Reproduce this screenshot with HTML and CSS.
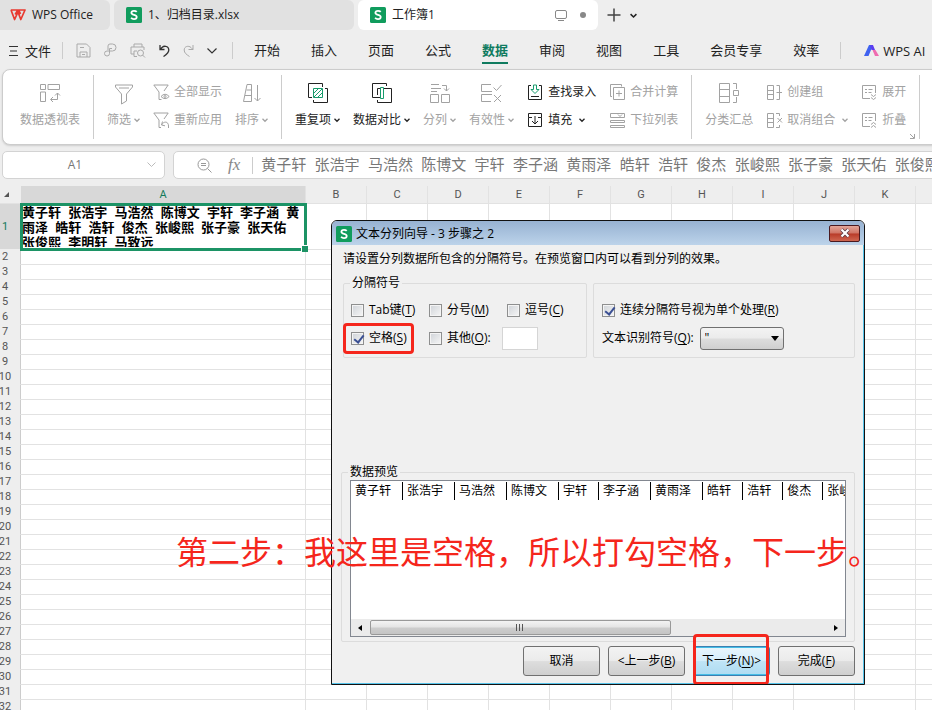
FILE: index.html
```html
<!DOCTYPE html>
<html lang="zh-CN">
<head>
<meta charset="utf-8">
<meta name="viewport" content="width=device-width, initial-scale=1">
<title>工作簿1 - WPS Office</title>
<link rel="stylesheet" href="styles.css">
</head>
<body>
<svg class="defs" aria-hidden="true">
  <symbol id="chev" viewBox="0 0 6 6"><path d="M.5 1.8 3 4.3 5.500 1.800" fill="none" stroke="currentColor" stroke-width="1.3"/></symbol>
  <symbol id="sheet-logo" viewBox="0 0 16 16"><rect width="16" height="16" rx="1.500" fill="#109c5d"/><path d="M10.700 4.900C10.100 4.200 9.200 3.800 8 3.800c-1.600 0-2.600.8-2.600 2 0 2.800 5.300 1.400 5.300 4.200 0 1.300-1.100 2.100-2.700 2.100-1.300 0-2.300-.5-2.900-1.300" fill="none" stroke="#fff" stroke-width="1.800"/></symbol>
</svg>
<div class="app">
  <header class="tabs">
    <button class="tab home" type="button">
      <svg width="16" height="12" viewBox="0 0 16 12"><path d="M.8 1h7L5.200 5.500M1 1l3.600 9.500L8 3l2.800 7.500L15 1H8.500l2 4" fill="none" stroke="#e8392f" stroke-width="1.700" stroke-linejoin="round"/></svg>
      WPS Office
    </button>
    <button class="tab file" type="button"><svg width="16" height="16"><use href="#sheet-logo"/></svg>1、归档目录.xlsx</button>
    <button class="tab file active" type="button"><svg width="16" height="16"><use href="#sheet-logo"/></svg>工作簿1
      <svg class="screen" width="12" height="11" viewBox="0 0 12 11"><rect x=".5" y=".5" width="11" height="8" rx="1.500" fill="none" stroke="#888"/><path d="M3 10.500h6" stroke="#888"/></svg>
      <span class="dot"></span>
    </button>
    <button class="plain new" type="button" aria-label="新建"><svg width="14" height="14" viewBox="0 0 14 14"><path d="M7 .5v13M.5 7h13" stroke="#444" stroke-width="1.500"/></svg></button>
    <button class="plain" type="button" aria-label="标签列表"><svg width="7" height="7"><use href="#chev"/></svg></button>
  </header>

  <nav class="menu">
    <button class="plain filebtn" type="button"><svg width="9" height="12" viewBox="0 0 9 12"><path d="M0 1.500h9M1 6h7M0 10.500h9" stroke="#333"/></svg>文件</button>
    <span class="rule"></span>
    <div class="quick">
      <svg width="15" height="15" viewBox="0 0 15 15"><path d="M1 1h9.500L14 4.500V14H1zM4 14V9h7v5M4 4.500h4M6 11.500h3"/></svg>
      <svg width="13" height="15" viewBox="0 0 13 15"><path d="M4 7V3q0-2 2-2h2.500a3.500 3.500 0 0 1 0 7H3a2.500 2.500 0 1 0 2.500 2.500V5.500H8"/></svg>
      <svg width="16" height="15" viewBox="0 0 16 15"><path d="M4 4V1h8v3M4 11H1V4h13v3M4 13.500V8h3M4 13.500h3"/><circle cx="10.500" cy="10" r="3"/><path d="m12.500 12 2.500 2.500"/></svg>
      <svg class="dark" width="11" height="13" viewBox="0 0 11 13"><path d="M1 1v4.500h4.500M1 5.500l2-2C5.500 1.200 9.800 2.300 9.800 6c0 3-2.300 4.500-5.300 6.500" stroke-width="1.300"/></svg>
      <svg width="11" height="13" viewBox="0 0 11 13"><path d="M10 1v4.500H5.500M10 5.500l-2-2C5.500 1.200 1.200 2.300 1.200 6c0 3 2.300 4.500 5.300 6.500"/></svg>
      <svg class="dark" width="10" height="6" viewBox="0 0 10 6"><path d="m.5.5 4.500 4.500L9.500.5" stroke-width="1.200"/></svg>
    </div>
    <span class="rule"></span>
    <div class="links">
      <a href="#">开始</a><a href="#">插入</a><a href="#">页面</a><a href="#">公式</a><a href="#" class="on">数据</a><a href="#">审阅</a><a href="#">视图</a><a href="#">工具</a><a href="#">会员专享</a><a href="#">效率</a>
    </div>
    <span class="rule"></span>
    <button class="plain ai" type="button"><svg width="15" height="12" viewBox="0 0 15 12"><path d="M5 0h4L4.500 11H0z" fill="#3f62f0"/><path d="M6 0h3l2 5H7.500z" fill="#5b3df0"/><path d="M8.500 5h3L15 11h-4z" fill="#ef6bb0"/></svg>WPS AI</button>
  </nav>

  <section class="ribbon">
    <button class="tool off" type="button"><svg width="22" height="20" viewBox="0 0 22 20"><path d="M1.500 1.500h5v5h-5zM9 1.500h11.500v5H9zM1.500 9h5v9.500h-5zM18.500 10v6.500H12M16 12.500l2.500-2.500 2.500 2.500M14 14l-2.500 2.500L14 19"/></svg><span>数据透视表</span></button>
    <span class="rule"></span>
    <button class="tool off" type="button"><svg width="20" height="22" viewBox="0 0 20 22"><path d="M1.500 2h17v2l-6 7v7l-5 3V11l-6-7zM5 5h10"/></svg><span>筛选<svg class="c"><use href="#chev"/></svg></span></button>
    <div class="pair off">
      <button type="button"><svg width="17" height="17" viewBox="0 0 17 17"><path d="M6 15.500V8L.8 1h14.400L11 7M6 15.500h2.500M8 12.500q4-4.500 8.200 0-4.200 4.300-8.200 0z"/><circle cx="12" cy="12.500" r="1"/></svg>全部显示</button>
      <button type="button"><svg width="17" height="17" viewBox="0 0 17 17"><path d="M6 15.500V8L.8 1h14.400L11 7M9.500 9.500 8.500 13l3.500.8M8.500 13c2-4 7-4 7 1v2M6 15.500h2"/></svg>重新应用</button>
    </div>
    <button class="tool off" type="button"><svg width="20" height="20" viewBox="0 0 20 20"><path d="M5 1.500h4.500v17h-8zM4.500 7h5M3 12.500h6.500M15.500 2v16M12.500 15l3 3 3-3"/></svg><span>排序<svg class="c"><use href="#chev"/></svg></span></button>
    <span class="rule"></span>
    <button class="tool" type="button"><svg width="20" height="20" viewBox="0 0 20 20"><path d="M4 14.500H.5V.5h14V4M5.500 17v2.500h14v-14H17"/><path class="g" d="M5.500 5.500h9v9h-9zM6 10l4-4M6 14l8-8M10 14l4-4"/></svg><span>重复项<svg class="c"><use href="#chev"/></svg></span></button>
    <button class="tool" type="button"><svg width="20" height="20" viewBox="0 0 20 20"><path d="M8 14.500H.5V.5h14V3M5.500 17v2.500h14v-14H12M8.500 5.500h-3V12"/><path class="g" d="M8.500 4.500h3v11h-3z"/></svg><span>数据对比<svg class="c"><use href="#chev"/></svg></span></button>
    <button class="tool off" type="button"><svg width="20" height="20" viewBox="0 0 20 20"><path d="M1 1.500h8M1 5.500h10M1 8.500h6M12 2.500h4.500V8M14 5.500l2.500 2.500L19 5.500M.5 11.500h8v8h-8zM11.500 11.500h8v8h-8z"/></svg><span>分列<svg class="c"><use href="#chev"/></svg></span></button>
    <button class="tool off" type="button"><svg width="21" height="20" viewBox="0 0 21 20"><path d="M10 1.500H.5v7H11M11 11.500H.5v7H10M12.500 4.500l3 3 5-5.500M13 12l7 7M20 12l-7 7"/></svg><span>有效性<svg class="c"><use href="#chev"/></svg></span></button>
    <div class="pair">
      <button type="button"><svg width="17" height="17" viewBox="0 0 17 17"><path d="M4 1.500H1.500v14h13v-14H12M4 12.500h8"/><path class="g" d="M6.500 1h3v4.500H12l-4 4-4-4h2.500z"/></svg>查找录入</button>
      <button type="button"><svg width="17" height="17" viewBox="0 0 17 17"><path d="M5 5.500H1.500v-4h13v4H11M1.500 5.500v9h13v-9M8 4v8M5 9l3 3 3-3"/></svg>填充<svg class="c"><use href="#chev"/></svg></button>
    </div>
    <div class="pair off">
      <button type="button"><svg width="17" height="17" viewBox="0 0 17 17"><path d="M3 12.500H1.500v-12h11v2M4.500 3.500h11v12h-11zM10 6.500v6M7 9.500h6"/></svg>合并计算</button>
      <button type="button"><svg width="17" height="17" viewBox="0 0 17 17"><path d="M1.500 1.500h14v4h-14zM1.500 8.500h14v2h-14zM1.500 13.500h14v2h-14zM9 2.500l2 2 2-2"/></svg>下拉列表</button>
    </div>
    <span class="rule"></span>
    <button class="tool off" type="button"><svg width="20" height="20" viewBox="0 0 20 20"><path d="M.5.5h10v19H.5zM.5 6.500h10M.5 13.500h10M14 .5h3.500V6M14 19.500h3.500V14M14.500 7.500h5v5h-5z"/></svg><span>分类汇总</span></button>
    <div class="pair off">
      <button type="button"><svg width="17" height="17" viewBox="0 0 17 17"><path d="M1.500 1.500h6v14h-6zM1.500 6.500h6M1.500 10.500h6M10.500 1.500h3v14h-3M10.500 8.500H16"/></svg>创建组</button>
      <button type="button"><svg width="17" height="17" viewBox="0 0 17 17"><path d="M1.500 1.500h6v14h-6zM1.500 6.500h6M1.500 10.500h6M10 1.500h3.500V4M10 15.500h3.500V13M11.500 6l4.500 4.500M16 6l-4.500 4.500"/></svg>取消组合<svg class="c"><use href="#chev"/></svg></button>
    </div>
    <div class="pair off">
      <button type="button"><svg width="17" height="17" viewBox="0 0 17 17"><path d="M9 14.500H1.500v-13h13V9M4 5.500h2M7.500 5.500h4M4 8.500h2M7.500 8.500h3M10 10.500l2.500 2 2.500-2M10 13.500l2.500 2 2.500-2"/></svg>展开</button>
      <button type="button"><svg width="17" height="17" viewBox="0 0 17 17"><path d="M9 14.500H1.500v-13h13V9M4 5.500h2M7.500 5.500h4M4 8.500h2M7.500 8.500h3M10 12.500l2.500-2 2.500 2M10 15.500l2.500-2 2.500 2"/></svg>折叠</button>
    </div>
    <svg class="corner off" width="5" height="5" viewBox="0 0 5 5"><path d="m0 0 4 4M4.500 0v4.500H0"/></svg>
    <span class="rule"></span>
  </section>

  <section class="formula">
    <div class="namebox"><input aria-label="名称框" value="A1"><svg width="9" height="6" viewBox="0 0 9 6"><path d="m.5.500 4 4 4-4" fill="none" stroke="#bbb"/></svg></div>
    <div class="fx">
      <svg width="15" height="15" viewBox="0 0 15 15" fill="none" stroke="#999"><circle cx="6.500" cy="6.500" r="5.500"/><path d="m10.500 10.500 4 4M4 5.500h5M4 7.500h5"/></svg>
      <i>fx</i><span class="rule"></span>
      <input aria-label="编辑栏" value="黄子轩  张浩宇  马浩然  陈博文  宇轩  李子涵  黄雨泽  皓轩  浩轩  俊杰  张峻熙  张子豪  张天佑  张俊熙  李明轩  马致远">
    </div>
  </section>

  <main class="sheet">
    <table id="grid">
      <colgroup><col class="c-head"><col class="c-a"></colgroup>
      <thead><tr><th class="all"><svg width="5" height="5" viewBox="0 0 5 5"><path d="M5 0v5H0z" fill="#555"/></svg></th></tr></thead>
      <tbody></tbody>
    </table>
  </main>

  <div class="dialog" role="dialog" aria-labelledby="dlg-title">
    <div class="titlebar">
      <svg width="16" height="16"><use href="#sheet-logo"/></svg>
      <span id="dlg-title">文本分列向导 - 3 步骤之 2</span>
      <button type="button" class="close" aria-label="关闭"><svg width="12" height="10" viewBox="0 0 12 10"><path d="m2.500 1.500 7 7M9.500 1.500l-7 7" stroke="#5a3a44" stroke-width="3.800"/><path d="m2.500 1.500 7 7M9.500 1.500l-7 7" stroke="#fff" stroke-width="2.200"/></svg></button>
    </div>
    <form class="body">
      <p>请设置分列数据所包含的分隔符号。在预览窗口内可以看到分列的效果。</p>
      <div class="groups">
        <fieldset class="delims">
          <legend>分隔符号</legend>
          <div class="opts">
            <label><input type="checkbox">Tab键(<u>T</u>)</label>
            <label><input type="checkbox">分号(<u>M</u>)</label>
            <label><input type="checkbox">逗号(<u>C</u>)</label>
            <label class="marked"><input type="checkbox" checked>空格(<u>S</u>)</label>
            <label><input type="checkbox">其他(<u>O</u>):</label>
            <input class="other" type="text" aria-label="其他分隔符">
          </div>
        </fieldset>
        <fieldset class="extra">
          <label><input type="checkbox" checked>连续分隔符号视为单个处理(<u>R</u>)</label>
          <div class="qual"><label for="q">文本识别符号(<u>Q</u>):</label>
            <span class="drop"><select id="q"><option>"</option><option>'</option></select><svg width="8" height="5" viewBox="0 0 8 5"><path d="M0 0h8L4 5z"/></svg></span>
          </div>
        </fieldset>
      </div>
      <fieldset class="preview">
        <legend>数据预览</legend>
        <div class="pane">
          <div class="clip"><table><tbody><tr><td>黄子轩</td><td>张浩宇</td><td>马浩然</td><td>陈博文</td><td>宇轩</td><td>李子涵</td><td>黄雨泽</td><td>皓轩</td><td>浩轩</td><td>俊杰</td><td>张峻熙</td></tr></tbody></table></div>
          <div class="scroll">
            <svg width="4" height="6" viewBox="0 0 4 6"><path d="M4 0v6L0 3z"/></svg>
            <div class="track"><div class="thumb"><svg width="8" height="7" viewBox="0 0 8 7"><path d="M.5 0v7M3.500 0v7M6.500 0v7" stroke="#555"/></svg></div></div>
            <svg width="4" height="6" viewBox="0 0 4 6"><path d="M0 0v6l4-3z"/></svg>
          </div>
        </div>
      </fieldset>
      <div class="actions">
        <button type="button">取消</button>
        <button type="button">&lt;上一步(<u>B</u>)</button>
        <button type="button" class="next marked">下一步(<u>N</u>)&gt;</button>
        <button type="button">完成(<u>F</u>)</button>
      </div>
    </form>
  </div>
  <div class="note">第二步：我这里是空格，所以打勾空格，下一步。</div>
</div>
<script src="sheet.js"></script>
</body>
</html>
```
FILE: styles.css
```css
* { box-sizing: border-box; }
body {
  margin: 0;
  background: #eee;
  color: #222;
  font: 12px/16px "Open Sans", "Noto Sans CJK SC", sans-serif;
}
button, input, select { font: inherit; color: inherit; }
button { margin: 0; padding: 0; border: 0; background: none; white-space: nowrap; }
svg { flex: none; display: block; }
a { color: inherit; text-decoration: none; }
.defs { position: absolute; width: 0; height: 0; }
.app { position: relative; display: flex; flex-direction: column; height: 100vh; overflow: hidden; }
.rule { flex: none; width: 1px; background: #ccc; }

/* window tabs */
.tabs { display: flex; gap: 4px; height: 30px; }
.tab { display: flex; align-items: center; gap: 6px; padding: 0 12px; background: #e1e1e1; border-radius: 0 0 6px 6px; }
.tab.home { flex: 0 0 110px; padding: 0 10px; border-radius: 0 6px 6px 0; }
.tab.file { flex: 0 0 240px; border-radius: 6px; }
.tab.active { background: #fff; }
.screen { margin-left: auto; }
.dot { width: 6px; height: 6px; margin-left: 7px; border-radius: 50%; background: #888; }
.plain { display: flex; align-items: center; }
.new { margin: 0 5px; }

/* menu row */
.menu { display: flex; align-items: center; height: 39px; padding-top: 2px; font-size: 13px; line-height: 24px; }
.menu .rule { height: 17px; }
.filebtn { gap: 7px; padding: 0 11px 0 9px; }
.quick { display: flex; align-items: center; gap: 13px; padding: 0 15px 0 13px; fill: none; stroke: #aaa; }
.quick .dark { stroke: #333; }
.links { display: flex; flex: none; gap: 31px; padding: 0 21px; }
.links a { border-bottom: 2px solid transparent; }
.links .on { color: #0f7b5f; font-weight: 700; border-color: #0f7b5f; }
.ai { gap: 4px; padding-left: 23px; }

/* ribbon */
.ribbon {
  display: flex; flex: none; gap: 13px; height: 76px; margin: 0 -8px 0 2px; padding: 5px 0 5px 17px;
  background: #fff; border: 1px solid #ccc; border-radius: 8px; box-shadow: 0 1px 2px #ccc;
}
.ribbon svg { fill: none; stroke: currentColor; }
.ribbon button { flex: none; }
.ribbon .off { color: #a2a2a2; }
.ribbon .g { stroke: #189b6c; }
.tool { display: flex; flex-direction: column; align-items: center; justify-content: space-between; padding: 8px 0 11px; }
.tool span { display: flex; align-items: center; }
.ribbon .c { width: 6px; height: 6px; margin-left: 3px; }
.pair { display: flex; flex: none; flex-direction: column; gap: 12px; padding-top: 9px; }
.pair button { display: flex; align-items: center; gap: 4px; height: 16px; }
.corner { align-self: flex-end; margin: 0 -9px 0 -9px; }

/* formula bar */
.formula { display: flex; flex: none; gap: 8px; height: 41px; padding: 6px 0 7px 2px; color: #777; }
.namebox, .fx { display: flex; align-items: center; min-width: 0; background: #fff; border: 1px solid #d3d3d3; border-radius: 5px; }
.namebox { flex: 0 0 163px; padding-right: 8px; }
.formula input { width: 0; min-width: 0; flex: 1; padding: 0; border: 0; background: none; outline: 0; }
.namebox input { text-align: center; }
.fx { flex: 1; padding-left: 23px; margin-right: -8px; }
.fx i { margin: 0 12px 0 16px; font: italic 17px/20px "Liberation Serif", serif; color: #888; }
.fx .rule { height: 17px; margin-right: 8px; }
.fx input { font: 15px/20px "Liberation Sans", "Noto Sans CJK SC", sans-serif; }

/* sheet */
.sheet { flex: 1; overflow: hidden; }
.sheet table { width: 977px; table-layout: fixed; border-collapse: separate; border-spacing: 0; background: #fff; }
.c-head { width: 21px; }
.c-a { width: 285px; }
.sheet th, .sheet td { height: 15px; padding: 0; border: solid #e2e2e2; border-width: 0 1px 1px 0; line-height: 14px; }
.sheet th { background: #eee; color: #555; font: 11px/14px Roboto, sans-serif; white-space: nowrap; }
.sheet thead th { height: 18px; }
.sheet tbody th { border-bottom-color: #eee; border-right-color: #ccc; }
.sheet tbody th span { display: flex; justify-content: center; width: 10px; }
.sheet .picked { background: #d8d8d8; color: #137a5b; }
.sheet .all { border-right-color: #eee; }
.all svg { margin-left: 4px; }
.sheet td.sel { position: relative; vertical-align: top; height: 46px; outline: 3px solid #1c9365; outline-offset: -2px; }
.sel div {
  height: 43px; padding: 1px 0 0 1px; overflow: hidden; white-space: pre; color: #000;
  font: bold 13px/15px "Liberation Sans", "Noto Sans CJK SC", sans-serif;
}
.sel::after { content: ""; position: absolute; right: -3px; bottom: -3px; width: 6px; height: 6px; background: #1c9365; border: solid #fff; border-width: 1px 0 0 1px; }

/* dialog */
.dialog {
  position: absolute; left: 331px; top: 220px; width: 534px; color: #000;
  border: 1px solid #111; border-radius: 6px 6px 0 0; background: #f0f0f0; overflow: hidden;
}
.titlebar { display: flex; align-items: center; gap: 4px; height: 24px; padding: 1px 4px 0; background: linear-gradient(#97b2d2, #bcd3ea); }
.close {
  display: flex; align-items: center; justify-content: center; width: 31px; height: 17px; margin: 0 0 1px auto;
  border: 1px solid #4a1a20; border-radius: 2px; background: linear-gradient(#e3a698, #cf7263 48%, #b83a28 52%, #cf6650);
}
.body { padding: 5px 8px 7px 9px; border: solid #55c3ea; border-width: 0 1px 1px 0; }
.body p { margin: 0; padding: 0 2px; line-height: 18px; }
fieldset { min-width: 0; margin: 0; border: 1px solid #dcdcdc; border-radius: 2px; }
legend { padding: 0 2px; }
u { text-underline-offset: 2px; }
.groups { display: flex; gap: 6px; margin: 7px 0 106px 2px; }
.delims { flex: 0 0 244px; padding: 5px 6px; }
.opts { display: grid; grid-template-columns: repeat(3, 78px); grid-auto-rows: 28px; align-items: center; }
.body label { display: flex; align-items: center; white-space: nowrap; }
.body input[type=checkbox] {
  appearance: none; display: grid; flex: none; width: 13px; height: 13px; margin: 0 5px 0 1px;
  border: 1px solid #8e8f8f; background: linear-gradient(135deg, #cfd3d8, #f6f6f6); box-shadow: inset 0 0 0 1px #f4f4f4;
}
.body input:checked::before {
  content: ""; width: 4px; height: 8px; margin: 0 0 0 4px; border: solid #3a4f93; border-width: 0 2px 2px 0; transform: rotate(38deg);
}
.marked { position: relative; }
.marked::after { content: ""; position: absolute; border: 3px solid #f5261c; border-radius: 4px; }
label.marked::after { inset: -1px 14px -2px -7px; }
.opts label { height: 28px; }
.other { width: 36px; height: 23px; margin-left: -4px; padding: 0 3px; border: 1px solid #d5d5d5; background: #fff; }
.extra { flex: 1; margin-top: 8px; padding: 12px 7px 5px; }
.extra > * { height: 28px; }
.qual { display: flex; align-items: center; gap: 6px; padding-left: 1px; }
.drop { display: grid; align-items: center; }
.drop > * { grid-area: 1 / 1; }
.drop svg { justify-self: end; margin-right: 5px; pointer-events: none; }
.drop select, .actions button {
  border: 1px solid #707070; border-radius: 3px; background: linear-gradient(#f3f3f3, #ebebeb 48%, #ddd 52%, #cfcfcf);
}
.drop select { appearance: none; width: 84px; height: 23px; padding: 0 4px; color: #000; }
.preview { padding: 0 8px 4px; }
.preview legend { margin-left: -2px; }
.pane { display: flex; flex-direction: column; min-height: 157px; border: 1px solid #828790; background: #fff; }
.clip { flex: 1; overflow: hidden; padding: 1px 1px 0 0; }
.clip table { border-spacing: 0; }
.clip td { height: 18px; padding: 0 11px 0 4px; border-left: 1px solid #000; white-space: nowrap; line-height: 18px; }
.clip td:first-child { border-color: transparent; padding-left: 3px; }
.scroll { display: flex; align-items: center; gap: 8px; height: 17px; padding: 0 7px; background: #ebebeb; }
.track { flex: 1; }
.thumb { display: flex; align-items: center; justify-content: center; width: 66%; height: 15px; border: 1px solid #999; border-radius: 2px; background: linear-gradient(#f3f3f3, #e4e4e4 48%, #cdcdcd 52%, #c4c4c4); }
.actions { display: flex; justify-content: flex-end; gap: 8px; padding-top: 4px; }
.actions button { width: 77px; height: 30px; }
.actions .next { border-color: #3c7fb1; background: linear-gradient(#e8f5fc, #d6eefb 48%, #bfe4f6 52%, #aedcf2); box-shadow: inset 0 0 0 1px #45bde6; }
.next::after { inset: -13px 0 -10px -1px; }

.note { position: absolute; left: 176px; top: 530px; font: 32px/40px "Noto Sans CJK SC", sans-serif; color: #f5261c; white-space: nowrap; }
```
FILE: sheet.js
```js
const names = [
  "黄子轩  张浩宇  马浩然  陈博文  宇轩  李子涵  黄",
  "雨泽  皓轩  浩轩  俊杰  张峻熙  张子豪  张天佑",
  "张俊熙  李明轩  马致远"
].join("\n");
const letters = [..."ABCDEFGHIJK", ""];
const grid = document.getElementById("grid");
const head = grid.tHead.rows[0];

for (const letter of letters) {
  const th = document.createElement("th");
  th.textContent = letter;
  if (letter === "A") th.className = "picked";
  head.append(th);
}

for (let n = 1; n <= 32; n++) {
  const row = grid.tBodies[0].insertRow();
  const th = document.createElement("th");
  const label = document.createElement("span");
  label.textContent = n;
  th.append(label);
  row.append(th);
  for (const letter of letters) {
    const cell = row.insertCell();
    if (n === 1 && letter === "A") {
      th.className = "picked";
      cell.className = "sel";
      const text = document.createElement("div");
      text.textContent = names;
      cell.append(text);
    }
  }
}
```
